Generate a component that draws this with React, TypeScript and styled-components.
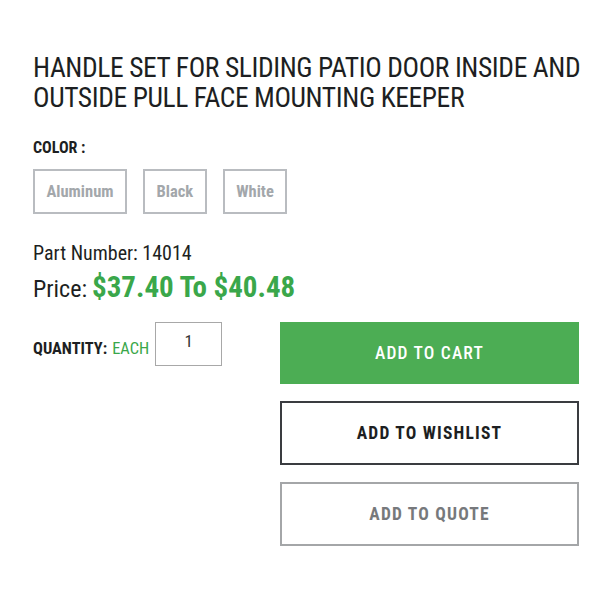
import React from "react";
import styled, { createGlobalStyle } from "styled-components";

const Global = createGlobalStyle`
  html, body { margin: 0; padding: 0; background: #fff; }
  body { font-family: "Roboto Condensed", Roboto, "Liberation Sans", sans-serif; color: #1d1f22; }
  * { box-sizing: border-box; }
`;

const Page = styled.div`
  padding: 53px 21px 0 33px;
  width: 600px;
`;

const Title = styled.h1`
  margin: 0 -12px 0 0;
  font-size: 27.5px;
  line-height: 30px;
  font-weight: 400;
  letter-spacing: -0.4px;
  color: #1d1f22;
`;

const Label = styled.div`
  margin-top: 26px;
  font-size: 16px;
  font-weight: 700;
  line-height: 18px;
`;

const Swatches = styled.div`
  display: flex;
  gap: 16px;
  margin-top: 12px;
`;

const Swatch = styled.button`
  height: 45px;
  padding: 0 11.5px;
  border: 2px solid #b9bcc0;
  background: #fff;
  color: #a3a7ab;
  font-family: inherit;
  font-weight: 700;
  font-size: 16.5px;
  cursor: pointer;
`;

const PartNumber = styled.div`
  margin-top: 28px;
  font-size: 20px;
  line-height: 22px;
`;

const PriceRow = styled.div`
  margin-top: 6px;
  display: flex;
  align-items: baseline;
  gap: 5px;
  font-size: 24px;
`;

const PriceValue = styled.span`
  color: #3aa74a;
  font-weight: 700;
  font-size: 29px;
`;

const Lower = styled.div`
  margin-top: 18px;
  display: flex;
  justify-content: space-between;
`;

const Quantity = styled.div`
  display: flex;
  align-items: center;
  gap: 6px;
  height: 44px;
  font-size: 16.4px;
`;

const QtyText = styled.div`
  display: flex;
  gap: 5px;
  padding-top: 8px;
`;

const QtyLabel = styled.span`
  font-weight: 700;
`;

const Each = styled.span`
  color: #3aa74a;
`;

const QtyInput = styled.input`
  width: 67px;
  height: 44px;
  border: 1px solid #a8a8a8;
  font-family: inherit;
  font-size: 17px;
  text-align: center;
  padding: 0 0 6px;
  color: #333;
`;

const Buttons = styled.div`
  display: flex;
  flex-direction: column;
  gap: 17px;
  width: 299px;
`;

const Button = styled.button<{ $variant: "primary" | "dark" | "muted" }>`
  height: ${(p) => (p.$variant === "primary" ? "62px" : "64px")};
  width: 100%;
  font-family: inherit;
  font-size: 17.5px;
  letter-spacing: 1.2px;
  text-transform: uppercase;
  cursor: pointer;
  font-weight: ${(p) => (p.$variant === "primary" ? 500 : 700)};
  background: ${(p) => (p.$variant === "primary" ? "#4cad54" : "#fff")};
  color: ${(p) =>
    p.$variant === "primary" ? "#fff" : p.$variant === "dark" ? "#1d1f22" : "#77797c"};
  border: ${(p) =>
    p.$variant === "primary"
      ? "none"
      : p.$variant === "dark"
      ? "2px solid #3a3c40"
      : "2px solid #a4a6a8"};
`;

export default function App() {
  return (
    <>
      <Global />
      <Page>
        <Title>
          HANDLE SET FOR SLIDING PATIO DOOR INSIDE AND OUTSIDE PULL FACE MOUNTING KEEPER
        </Title>
        <Label>COLOR :</Label>
        <Swatches>
          <Swatch>Aluminum</Swatch>
          <Swatch>Black</Swatch>
          <Swatch>White</Swatch>
        </Swatches>
        <PartNumber>Part Number: 14014</PartNumber>
        <PriceRow>
          <span>Price:</span>
          <PriceValue>$37.40 To $40.48</PriceValue>
        </PriceRow>
        <Lower>
          <Quantity>
            <QtyText>
              <QtyLabel>QUANTITY:</QtyLabel>
              <Each>EACH</Each>
            </QtyText>
            <QtyInput defaultValue="1" />
          </Quantity>
          <Buttons>
            <Button $variant="primary">Add to Cart</Button>
            <Button $variant="dark">Add to Wishlist</Button>
            <Button $variant="muted">Add to Quote</Button>
          </Buttons>
        </Lower>
      </Page>
    </>
  );
}
